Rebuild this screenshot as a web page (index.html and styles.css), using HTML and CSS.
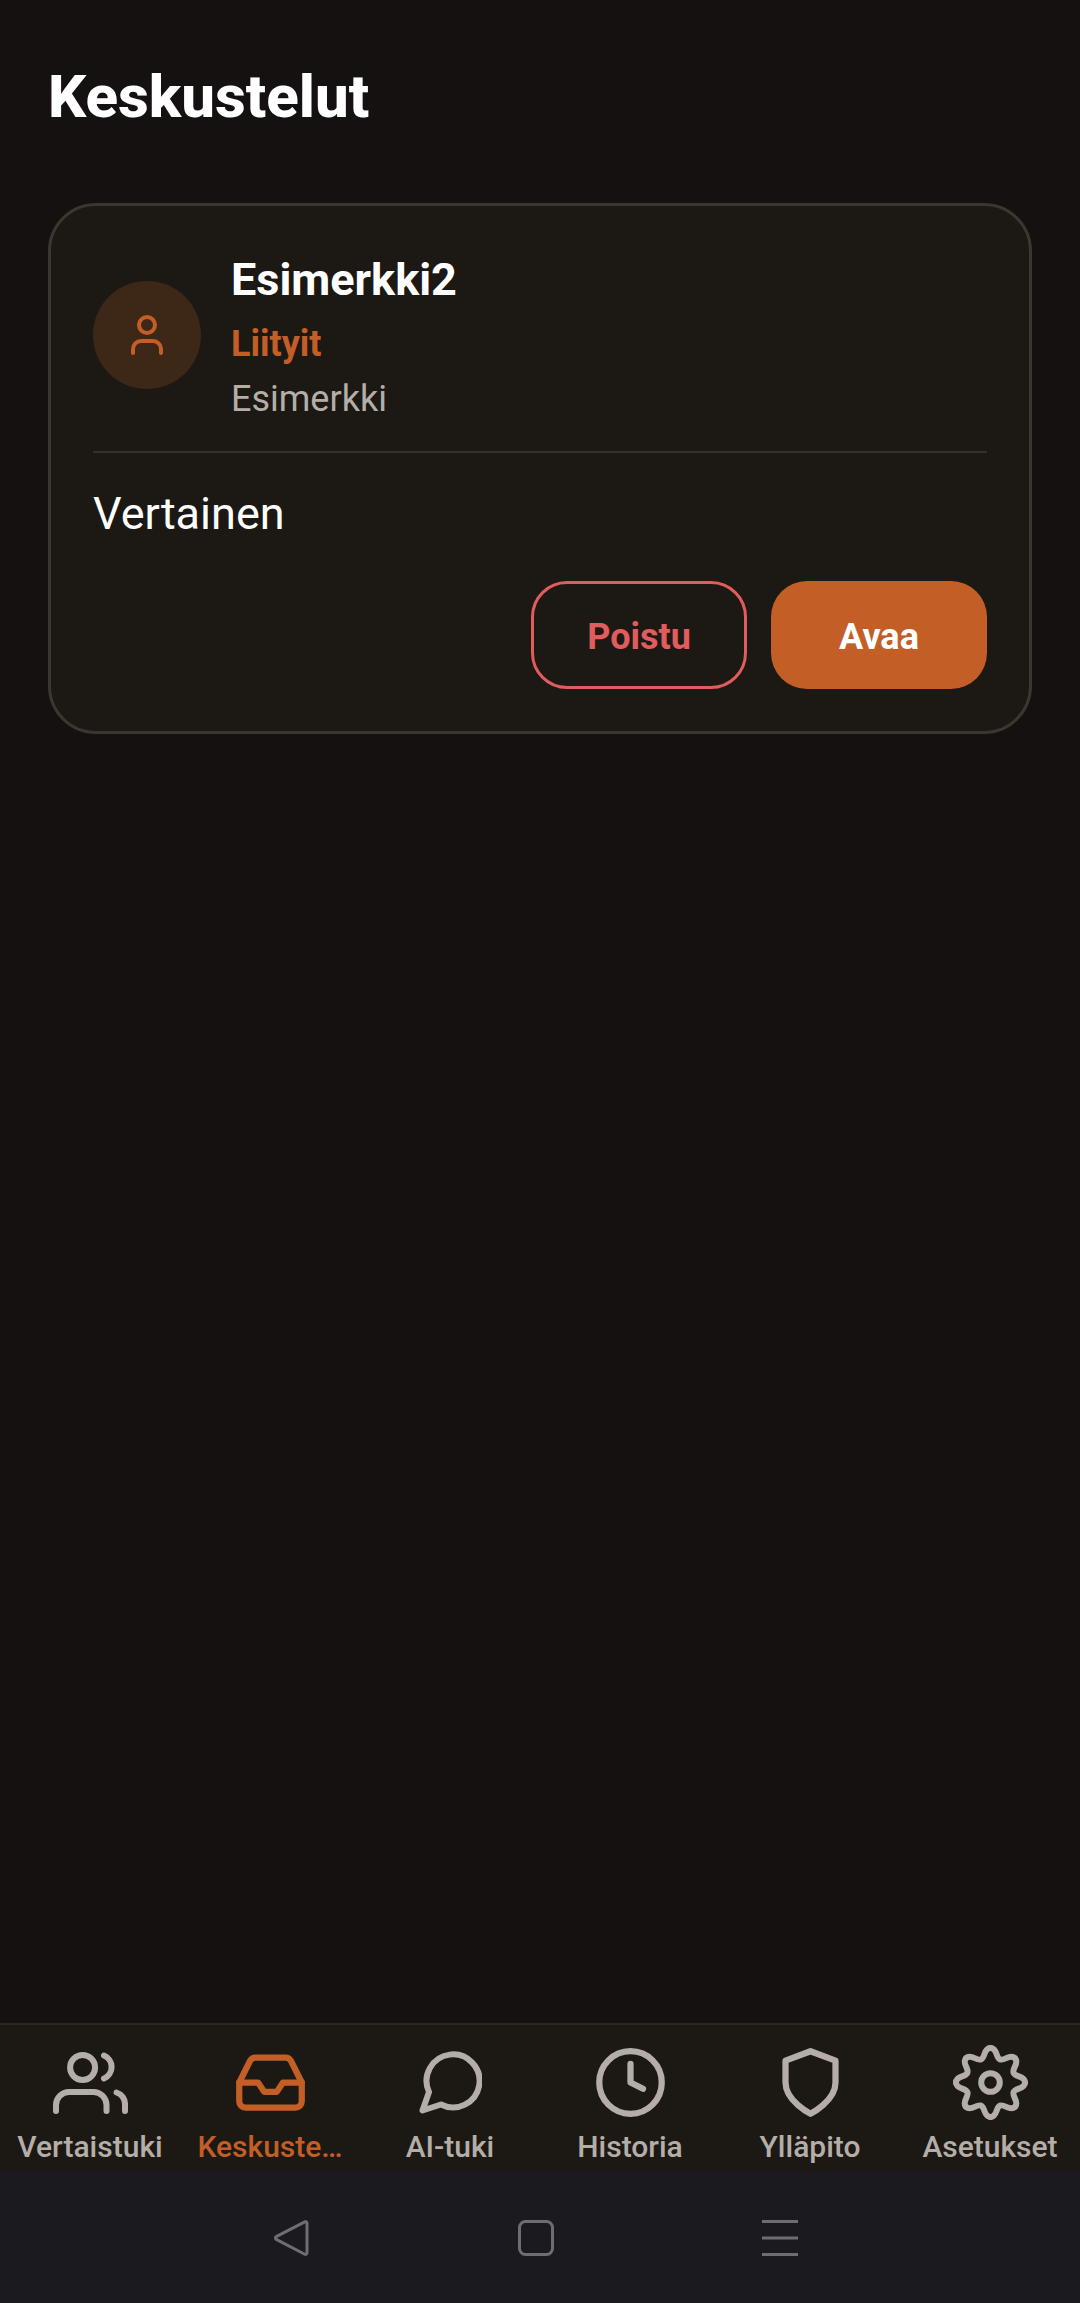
FILE: index.html
```html
<!DOCTYPE html>
<html lang="fi">

<head>
    <meta charset="UTF-8">
    <meta name="viewport" content="width=device-width, initial-scale=1.0">
    <title>Keskustelut</title>
    <link rel="stylesheet" href="styles.css">
</head>

<body>
    <main class="content">
        <h1 class="page-title">Keskustelut</h1>

        <section class="card">
            <div class="card-head">
                <div class="avatar">
                    <svg class="avatar-icon" viewBox="0 0 24 24">
                        <path d="M19 21v-2a4 4 0 0 0-4-4H9a4 4 0 0 0-4 4v2" />
                        <circle cx="12" cy="7" r="4" />
                    </svg>
                </div>
                <div class="card-info">
                    <div class="card-name">Esimerkki2</div>
                    <div class="card-status">Liityit</div>
                    <div class="card-group">Esimerkki</div>
                </div>
            </div>
            <div class="card-role">Vertainen</div>
            <div class="card-actions">
                <button class="btn btn-leave">Poistu</button>
                <button class="btn btn-open">Avaa</button>
            </div>
        </section>
    </main>

    <nav class="tabs">
        <div class="tab">
            <div class="tab-icon-box">
                <svg class="icon-px icon-users" viewBox="0 0 75 62">
                    <circle cx="29.6" cy="15.5" r="12.5" />
                    <path d="M3 59v-6a13 13 0 0 1 13-13h24.5a13 13 0 0 1 13 13v6" />
                    <path d="M63.5 40.5a12 12 0 0 1 8.5 12v6.5" />
                    <path d="M51 3.5a12.5 12.5 0 0 1 0 23" />
                </svg>
            </div>
            <span class="tab-label">Vertaistuki</span>
        </div>
        <div class="tab active">
            <div class="tab-icon-box">
                <svg class="tab-icon" viewBox="0 0 24 24">
                    <polyline points="22 12 16 12 14 15 10 15 8 12 2 12" />
                    <path d="M5.45 5.11 2 12v6a2 2 0 0 0 2 2h16a2 2 0 0 0 2-2v-6l-3.45-6.89A2 2 0 0 0 16.76 4H7.24a2 2 0 0 0-1.79 1.11z" />
                </svg>
            </div>
            <span class="tab-label">Keskuste…</span>
        </div>
        <div class="tab">
            <div class="tab-icon-box">
                <svg class="icon-px icon-chat" viewBox="0 0 63 63">
                    <path d="M10 41 3.5 59.5 22 53.5A26.5 26.5 0 1 0 10 41Z" />
                </svg>
            </div>
            <span class="tab-label">AI-tuki</span>
        </div>
        <div class="tab">
            <div class="tab-icon-box">
                <svg class="tab-icon" viewBox="0 0 24 24">
                    <circle cx="12" cy="12" r="10" />
                    <polyline points="12 6 12 12 16 14" />
                </svg>
            </div>
            <span class="tab-label">Historia</span>
        </div>
        <div class="tab">
            <div class="tab-icon-box">
                <svg class="tab-icon" viewBox="0 0 24 24">
                    <path d="M12 22s-8-4-8-10V5l8-3 8 3v7c0 6-8 10-8 10z" />
                </svg>
            </div>
            <span class="tab-label">Ylläpito</span>
        </div>
        <div class="tab">
            <div class="tab-icon-box">
                <svg class="icon-px icon-gear" viewBox="-37.5 -37.5 75 75">
                    <defs>
                        <path id="gear-lobe" d="M34.5 0C34.5 7 25.01 4.95 23.1 9.57 21.19 14.19 29.35 19.45 24.4 24.4" />
                    </defs>
                    <use href="#gear-lobe" />
                    <use href="#gear-lobe" transform="rotate(45)" />
                    <use href="#gear-lobe" transform="rotate(90)" />
                    <use href="#gear-lobe" transform="rotate(135)" />
                    <use href="#gear-lobe" transform="rotate(180)" />
                    <use href="#gear-lobe" transform="rotate(225)" />
                    <use href="#gear-lobe" transform="rotate(270)" />
                    <use href="#gear-lobe" transform="rotate(315)" />
                    <circle r="9.3" />
                </svg>
            </div>
            <span class="tab-label">Asetukset</span>
        </div>
    </nav>

    <div class="system-bar">
        <svg class="system-icon" viewBox="0 0 36 36">
            <path d="M33 3v30a1.5 1.5 0 0 1-2.2 1.2L2.2 19.3a1.5 1.5 0 0 1 0-2.6L30.8 1.8A1.5 1.5 0 0 1 33 3z" />
        </svg>
        <svg class="system-icon" viewBox="0 0 36 36">
            <rect x="1.5" y="1.5" width="33" height="33" rx="6" />
        </svg>
        <svg class="system-icon" viewBox="0 0 36 36">
            <path d="M0 1.5h36M0 18h36M0 34.5h36" />
        </svg>
    </div>
</body>

</html>
```

FILE: styles.css
```css
* {
    box-sizing: border-box;
}

body {
    font-family: Roboto, sans-serif;
    background-color: #151110;
    display: flex;
    flex-direction: column;
    height: 2303px;
    margin: 0;
    color: #fff;
}

.content {
    flex: 1;
    padding: 0 48px;
}

.page-title {
    margin: 0;
    padding-top: 60px;
    height: 203px;
    font-size: 60px;
    line-height: 74px;
    font-weight: 800;
}

.card {
    background-color: #1c1915;
    border: 3px solid #3b362f;
    border-radius: 48px;
    padding: 42px;
    height: 531px;
}

.card-head {
    display: flex;
    align-items: center;
    gap: 30px;
    height: 205px;
    padding-bottom: 29px;
    border-bottom: 2px solid #34302a;
}

.avatar {
    width: 108px;
    height: 108px;
    border-radius: 50%;
    background-color: #3d2717;
    display: flex;
    align-items: center;
    justify-content: center;
    flex-shrink: 0;
}

.avatar-icon {
    width: 48px;
    height: 48px;
    fill: none;
    stroke: #c35f26;
    stroke-width: 2;
    stroke-linecap: round;
    stroke-linejoin: round;
}

.card-info {
    display: flex;
    flex-direction: column;
}

.card-name {
    font-size: 45px;
    line-height: 54px;
    font-weight: 700;
}

.card-status {
    margin-top: 13px;
    font-size: 36px;
    line-height: 48px;
    font-weight: 700;
    color: #c35f26;
}

.card-group {
    margin-top: 12px;
    font-size: 36px;
    line-height: 38px;
    color: #b5aea8;
}

.card-role {
    margin-top: 34px;
    font-size: 45px;
    line-height: 54px;
}

.card-actions {
    display: flex;
    justify-content: flex-end;
    gap: 24px;
    margin-top: 40px;
}

.btn {
    width: 216px;
    height: 108px;
    padding-top: 4px;
    border-radius: 36px;
    font-family: Roboto, sans-serif;
    font-size: 36px;
    font-weight: 700;
    cursor: pointer;
}

.btn-leave {
    background-color: transparent;
    border: 3px solid #e15c5c;
    color: #e15c5c;
}

.btn-open {
    background-color: #c35f26;
    border: none;
    color: #fff;
}

.tabs {
    display: flex;
    height: 149px;
    padding-top: 20px;
    background-color: #1c1915;
    border-top: 2px solid #2b2821;
}

.tab {
    flex: 1;
    display: flex;
    flex-direction: column;
    align-items: center;
    min-width: 0;
    color: #b5aea8;
}

.tab.active {
    color: #c35f26;
}

.tab-icon-box {
    display: flex;
    align-items: center;
    justify-content: center;
    height: 75px;
}

.tab-icon,
.icon-px {
    fill: none;
    stroke: currentColor;
    stroke-linecap: round;
    stroke-linejoin: round;
}

.tab-icon {
    width: 75px;
    height: 75px;
    stroke-width: 2;
}

.icon-px {
    stroke-width: 6;
}

.icon-users {
    width: 75px;
    height: 62px;
}

.icon-chat {
    width: 63px;
    height: 63px;
}

.icon-gear {
    width: 75px;
    height: 75px;
}

.tab-label {
    margin-top: 9px;
    font-size: 30px;
    line-height: 36px;
    font-weight: 500;
    white-space: nowrap;
}

.system-bar {
    display: flex;
    justify-content: center;
    align-items: center;
    gap: 208px;
    height: 131px;
    padding-right: 9px;
    background-color: #1a1a1f;
}

.system-icon {
    width: 36px;
    height: 36px;
    fill: none;
    stroke: #6d6e72;
    stroke-width: 3;
    stroke-linejoin: round;
}
```
